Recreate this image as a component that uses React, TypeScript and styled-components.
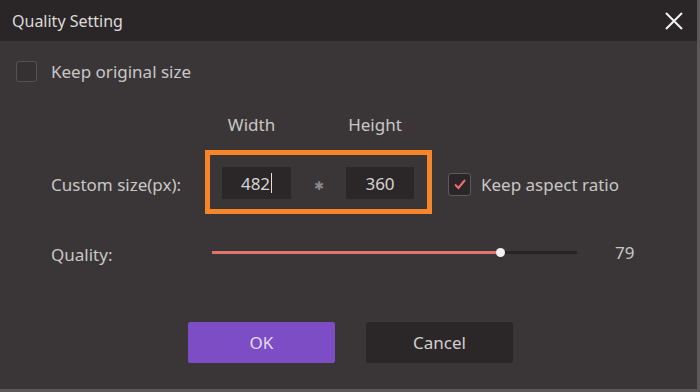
import React from "react";
import styled, { createGlobalStyle } from "styled-components";

const GlobalStyle = createGlobalStyle`
  html, body {
    margin: 0;
    padding: 0;
    background: #3a3637;
  }
  body {
    font-family: "Noto Sans", "Open Sans", sans-serif;
  }
`;

const Dialog = styled.div`
  width: 700px;
  height: 392px;
  box-sizing: border-box;
  background: #3a3637;
  border-right: 3px solid #5a5859;
  border-bottom: 3px solid #5a5859;
  display: flex;
  flex-direction: column;
  color: #c9c6c6;
`;

const TitleBar = styled.div`
  height: 41px;
  flex: none;
  background: #2a2627;
  display: flex;
  align-items: center;
  justify-content: space-between;
  padding: 0 13px 0 12px;
`;

const Title = styled.span`
  font-size: 16px;
  color: #dcdada;
`;

const CloseButton = styled.button`
  background: none;
  border: none;
  padding: 0;
  width: 20px;
  height: 20px;
  display: flex;
  align-items: center;
  justify-content: center;
  cursor: pointer;
`;

const Body = styled.div`
  flex: 1;
  display: flex;
  flex-direction: column;
`;

const OriginalRow = styled.label`
  display: flex;
  align-items: center;
  gap: 14px;
  margin: 19px 0 0 16px;
  height: 22px;
  font-size: 17px;
`;

const Box = styled.span<{ $checked?: boolean }>`
  width: ${(p) => (p.$checked ? 21 : 19)}px;
  height: ${(p) => (p.$checked ? 21 : 19)}px;
  flex: none;
  border: 1px solid ${(p) => (p.$checked ? "#5e5a5b" : "#555253")};
  border-radius: 3px;
  background: ${(p) => (p.$checked ? "#2b2728" : "#353132")};
  display: flex;
  align-items: center;
  justify-content: center;
`;

const Form = styled.div`
  padding-left: 51px;
  display: flex;
  flex-direction: column;
`;

const HeaderRow = styled.div`
  display: flex;
  height: 20px;
  margin-top: 32px;
  padding-left: 166px;
  font-size: 17px;
  align-items: center;
`;

const ColumnHead = styled.span<{ $w: number }>`
  width: ${(p) => p.$w}px;
  text-align: center;
`;

const HeadGap = styled.span`
  width: 55px;
`;

const SizeRow = styled.div`
  display: flex;
  align-items: center;
  margin-top: 16px;
  height: 64px;
`;

const Label = styled.span<{ $w: number }>`
  width: ${(p) => p.$w}px;
  flex: none;
  font-size: 17px;
  margin-top: 4px;
`;

const Highlight = styled.div`
  width: 227px;
  height: 64px;
  box-sizing: border-box;
  border: 5px solid #f7862a;
  display: flex;
  align-items: center;
  padding: 2px 13px 0 12px;
`;

const SizeInput = styled.div<{ $w: number }>`
  width: ${(p) => p.$w}px;
  height: 32px;
  background: #2b2728;
  display: flex;
  align-items: center;
  justify-content: center;
  font-size: 17px;
  color: #d6d3d3;
`;

const Caret = styled.span`
  display: inline-block;
  width: 1px;
  height: 20px;
  background: #e0e0e0;
  margin-left: 1px;
`;

const Times = styled.span`
  flex: 1;
  text-align: center;
  font-size: 12px;
  color: #8c8889;
  padding-top: 4px;
`;

const AspectRow = styled.label`
  display: flex;
  align-items: center;
  gap: 10px;
  margin-left: 16px;
  margin-top: 4px;
  font-size: 17px;
`;

const QualityRow = styled.div`
  display: flex;
  align-items: center;
  height: 20px;
  margin-top: 28px;
`;

const Slider = styled.div`
  position: relative;
  width: 365px;
  height: 3px;
  background: #272324;
  margin-left: 7px;
`;

const SliderFill = styled.div`
  height: 3px;
  background: #e3736d;
`;

const Thumb = styled.div`
  position: absolute;
  top: -3px;
  width: 9px;
  height: 9px;
  margin-left: -4px;
  border-radius: 50%;
  background: #f2f0f0;
`;

const Value = styled.span`
  margin-left: 38px;
  font-size: 17px;
`;

const Buttons = styled.div`
  display: flex;
  justify-content: center;
  gap: 31px;
  margin-top: 60px;
  padding-left: 4px;
`;

const Button = styled.button<{ $primary?: boolean }>`
  width: 147px;
  height: 41px;
  border: none;
  border-radius: 2px;
  font-family: inherit;
  font-size: 17px;
  color: ${(p) => (p.$primary ? "#e4dcf2" : "#d2cfcf")};
  background: ${(p) => (p.$primary ? "#7d4dc6" : "#2b2728")};
  cursor: pointer;
`;

const quality = 79;

export default function App() {
  return (
    <>
      <GlobalStyle />
      <Dialog>
        <TitleBar>
          <Title>Quality Setting</Title>
          <CloseButton aria-label="close">
            <svg width="18" height="18" viewBox="0 0 18 18">
              <path d="M1 1 L17 17 M17 1 L1 17" stroke="#f2f2f2" strokeWidth="2" />
            </svg>
          </CloseButton>
        </TitleBar>
        <Body>
          <OriginalRow>
            <Box />
            Keep original size
          </OriginalRow>
          <Form>
            <HeaderRow>
              <ColumnHead $w={69}>Width</ColumnHead>
              <HeadGap />
              <ColumnHead $w={68}>Height</ColumnHead>
            </HeaderRow>
            <SizeRow>
              <Label $w={154}>Custom size(px):</Label>
              <Highlight>
                <SizeInput $w={69}>
                  482
                  <Caret />
                </SizeInput>
                <Times>✱</Times>
                <SizeInput $w={68}>360</SizeInput>
              </Highlight>
              <AspectRow>
                <Box $checked>
                  <svg width="14" height="14" viewBox="0 0 14 14">
                    <path d="M2 7.5 L5.5 11 L12 3" stroke="#ef6f72" strokeWidth="2" fill="none" />
                  </svg>
                </Box>
                Keep aspect ratio
              </AspectRow>
            </SizeRow>
            <QualityRow>
              <Label $w={154}>Quality:</Label>
              <Slider>
                <SliderFill style={{ width: `${quality}%` }} />
                <Thumb style={{ left: `${quality}%` }} />
              </Slider>
              <Value>{quality}</Value>
            </QualityRow>
          </Form>
          <Buttons>
            <Button $primary>OK</Button>
            <Button>Cancel</Button>
          </Buttons>
        </Body>
      </Dialog>
    </>
  );
}
